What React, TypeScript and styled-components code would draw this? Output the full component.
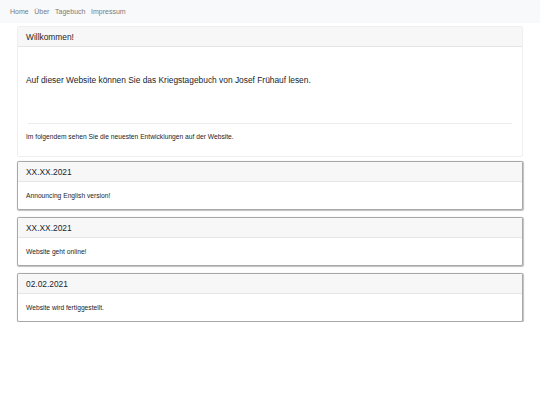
import React from "react";
import styled, { createGlobalStyle } from "styled-components";

const Global = createGlobalStyle`
  html, body { margin: 0; padding: 0; background: #fff; }
  body { font-family: "Liberation Sans", Arial, sans-serif; color: #212529; }
  * { box-sizing: border-box; }
`;

const Nav = styled.nav`
  height: 23px;
  background: #f8f9fa;
  display: flex;
  align-items: center;
  gap: 5.6px;
  padding: 0 10px;
`;

const NavLink = styled.a`
  font-size: 7px;
  color: #7a7b7c;
  text-decoration: none;
`;

const Container = styled.main`
  width: 506px;
  margin: 3px 0 0 17px;
  display: flex;
  flex-direction: column;
  gap: 4px;
`;

const NewsList = styled.div`
  display: flex;
  flex-direction: column;
  gap: 7px;
`;

const Card = styled.section<{ $strong?: boolean }>`
  border: 1px solid ${(p) => (p.$strong ? "#a8a8a8" : "#efefef")};
  border-radius: 2px;
  background: #fff;
  box-shadow: ${(p) => (p.$strong ? "0.5px 0.5px 1px rgba(0,0,0,0.25)" : "none")};
`;

const CardHeader = styled.header`
  background: #f7f7f7;
  border-bottom: 1px solid #e5e5e5;
  height: 20px;
  padding: 0 8px;
  display: flex;
  align-items: center;
  font-size: 8.4px;
  color: #212529;
`;

const CardBody = styled.div`
  padding: 0 8px;
`;

const Lead = styled.p`
  font-size: 8.4px;
  margin: 0;
  padding: 28px 0 38px;
`;

const Rule = styled.hr`
  border: 0;
  border-top: 1px solid #ececec;
  margin: 0 2px;
`;

const Small = styled.p`
  font-size: 6.7px;
  margin: 0;
  padding: 8.5px 0 16.5px;
`;

const NewsText = styled.p`
  font-size: 6.7px;
  margin: 0;
  height: 27px;
  display: flex;
  align-items: center;
`;

const news = [
  { date: "XX.XX.2021", text: "Announcing English version!" },
  { date: "XX.XX.2021", text: "Website geht online!" },
  { date: "02.02.2021", text: "Website wird fertiggestellt." },
];

export default function App() {
  return (
    <>
      <Global />
      <Nav>
        <NavLink href="#">Home</NavLink>
        <NavLink href="#">Über</NavLink>
        <NavLink href="#">Tagebuch</NavLink>
        <NavLink href="#">Impressum</NavLink>
      </Nav>
      <Container>
        <Card>
          <CardHeader>Willkommen!</CardHeader>
          <CardBody>
            <Lead>Auf dieser Website können Sie das Kriegstagebuch von Josef Frühauf lesen.</Lead>
            <Rule />
            <Small>Im folgendem sehen Sie die neuesten Entwicklungen auf der Website.</Small>
          </CardBody>
        </Card>
        <NewsList>
          {news.map((n, i) => (
            <Card $strong key={i}>
              <CardHeader>{n.date}</CardHeader>
              <CardBody>
                <NewsText>{n.text}</NewsText>
              </CardBody>
            </Card>
          ))}
        </NewsList>
      </Container>
    </>
  );
}
